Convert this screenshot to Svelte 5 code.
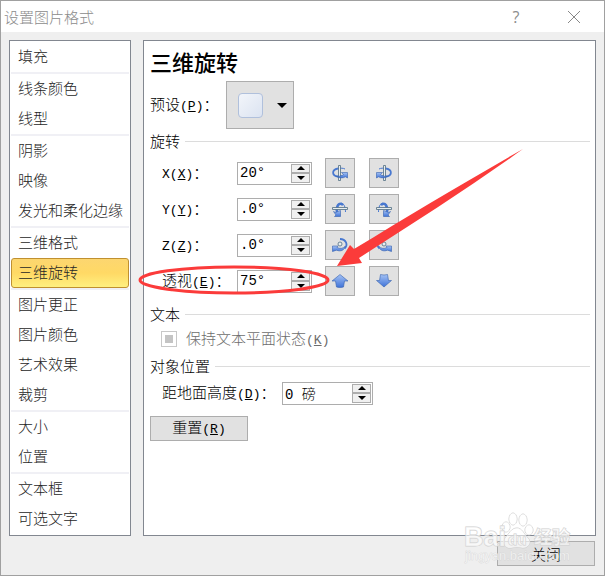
<script>
  let selected = $state('三维旋转');
  let values = $state({ x: '20°', y: '.0°', z: '.0°', p: '75°', ground: '0 磅' });

  const groups = [
    ['填充'],
    ['线条颜色', '线型'],
    ['阴影', '映像', '发光和柔化边缘'],
    ['三维格式', '三维旋转'],
    ['图片更正', '图片颜色', '艺术效果', '裁剪'],
    ['大小', '位置'],
    ['文本框', '可选文字']
  ];

  const rows = [
    { id: 'x', name: 'X', latin: true, key: 'X', icon: 'spin', left: '向左', right: '向右' },
    { id: 'y', name: 'Y', latin: true, key: 'Y', icon: 'tilt', left: '向上', right: '向下' },
    { id: 'z', name: 'Z', latin: true, key: 'Z', icon: 'roll', left: '顺时针', right: '逆时针' },
    { id: 'p', name: '透视', latin: false, key: 'E', icon: 'view', left: '缩小视野', right: '放大视野' }
  ];

  function step(id, by) {
    const unit = id === 'ground' ? ' 磅' : '°';
    values[id] = (parseFloat(values[id]) || 0) + by + unit;
  }
</script>

{#snippet accel(key)}<span class="latin">(<u>{key}</u>)</span>{/snippet}

{#snippet spinner(id)}
  <span class="spinner" class:wide={id === 'ground'}>
    <input id={'field-' + id} type="text" bind:value={values[id]} />
    <span class="steps">
      <button type="button" aria-label="增加" onclick={() => step(id, 1)}>
        <svg width="8" height="4" viewBox="0 0 8 4"><path d="M0 4L4 0L8 4z" /></svg>
      </button>
      <button type="button" aria-label="减少" onclick={() => step(id, -1)}>
        <svg width="8" height="4" viewBox="0 0 8 4"><path d="M0 0L4 4L8 0z" /></svg>
      </button>
    </span>
  </span>
{/snippet}

{#snippet icon(name, flip)}
  <svg width="18" height="18" viewBox="0 0 18 18">
    {#if name === 'view'}
      <path class="blue" d={flip ? 'M5.5 2.5Q9 3.5 12.5 2.5L13.5 8.5H16.5L9 15L1.5 8.5H4.5z' : 'M9 2.500L17 9H13.5L12.5 15Q9 16 5.5 15L4.5 9H1z'} />
    {:else}
      <g transform={flip ? 'translate(18 0) scale(-1 1)' : null}>
        {#if name === 'spin'}
          <path class="curve thin" d="M14 5C12 4 10 4 7 4.5" />
          <path class="curve" d="M7 4.500C0 6 1 12 7 12.500H12" />
          <path class="bar" d="M7.5 1.5h2v15h-2z" />
          <path class="blue" d="M10.5 8.500H16.500V14L14.500 12.800C12 14.500 8 14 5.500 12.500C8 12.500 11 12 12.500 10.500z" />
        {:else if name === 'tilt'}
          <path class="curve thin" d="M10 3C13 3.500 14.500 7 14.500 12" />
          <path class="curve wide-curve" d="M6 13C5 6 8 1.500 12 5" />
          <path class="blue" d="M2.500 11.500L4.500 12.500L8 11L9.500 10.500V16.500H3.500L5 15z" />
          <path class="bar" d="M1.5 7.5h15v2h-15z" />
        {:else}
          <path class="curve" d="M9 3C15 3 17.500 9 13.500 12.500" />
          <path class="blue" d="M1.500 10H7L6 11.500C9 13 12 12.500 14 10.500C13.500 14 10 16 5.500 14.200L1.500 15.500z" />
          <circle class="bar" cx="9" cy="8" r="2" />
        {/if}
      </g>
    {/if}
  </svg>
{/snippet}

<svg class="defs" width="0" height="0" aria-hidden="true">
  <linearGradient id="blue-fill" x1="0" y1="0" x2="0" y2="1">
    <stop offset="0" stop-color="#a5c2f4" />
    <stop offset="1" stop-color="#3f73d8" />
  </linearGradient>
</svg>

<div class="dialog">
  <header>
    <h1>设置图片格式</h1>
    <button type="button" class="help" aria-label="帮助">?</button>
    <button type="button" class="cross" aria-label="关闭窗口">
      <svg width="14" height="14" viewBox="0 0 14 14"><path d="M1 1L13 13M13 1L1 13" /></svg>
    </button>
  </header>

  <div class="body">
    <nav>
      {#each groups as group}
        <ul>
          {#each group as item}
            <li>
              <button type="button" class:active={selected === item} onclick={() => (selected = item)}>{item}</button>
            </li>
          {/each}
        </ul>
      {/each}
    </nav>

    <main>
      <h2>三维旋转</h2>

      <div class="preset">
        <label for="preset">预设{@render accel('P')}：</label>
        <button type="button" id="preset">
          <span class="swatch"></span>
          <svg width="10" height="5" viewBox="0 0 10 5"><path d="M0 0H10L5 5z" /></svg>
        </button>
      </div>

      <h3>旋转</h3>
      {#each rows as row}
        <div class="row">
          <label for={'field-' + row.id}><span class:latin={row.latin}>{row.name}</span>{@render accel(row.key)}：</label>
          {@render spinner(row.id)}
          <div class="turns">
            <button type="button" aria-label={row.left} onclick={() => step(row.id, -5)}>
              {@render icon(row.icon, false)}
            </button>
            <button type="button" aria-label={row.right} onclick={() => step(row.id, 5)}>
              {@render icon(row.icon, true)}
            </button>
          </div>
        </div>
      {/each}

      <h3 class="text-title">文本</h3>
      <label class="check">
        <input type="checkbox" disabled />
        <span>保持文本平面状态{@render accel('K')}</span>
      </label>

      <h3>对象位置</h3>
      <div class="ground">
        <label for="field-ground">距地面高度{@render accel('D')}：</label>
        {@render spinner('ground')}
      </div>

      <button type="button" class="push">重置{@render accel('R')}</button>

      <svg class="marks" width="400" height="160" viewBox="138 140 400 160" aria-hidden="true">
        <ellipse cx="234" cy="280" rx="94" ry="13" />
        <path d="M337 266L350 245L354 249C405 218 465 182 523 149C470 187 415 222 359 258L362 263z" />
      </svg>
    </main>
  </div>

  <footer>
    <button type="button" class="push">关闭</button>
    <svg class="watermark" width="116" height="56" viewBox="0 0 116 56" aria-hidden="true">
      <g class="paw">
        <ellipse cx="44" cy="17" rx="4" ry="5" />
        <ellipse cx="51" cy="9" rx="4" ry="6" />
        <ellipse cx="61" cy="10" rx="4" ry="6" />
        <ellipse cx="67" cy="20" rx="4" ry="5" />
        <path d="M55 18C60 18 62 24 66 28C70 32 67 38 61 38C57 37 53 37 49 38C43 39 40 33 43 28C47 24 49 18 55 18z" />
      </g>
      <text class="brand" x="2" y="36">Bai</text>
      <text class="du" x="46" y="35">du</text>
      <text class="cjk" x="72" y="34">经验</text>
      <text class="site" x="3" y="50">jingyan.baidu.com</text>
    </svg>
  </footer>
</div>

<style>
:global(body) {
  margin: 0;
  background: #a0a0a0;
}

.dialog {
  box-sizing: border-box;
  border: 1px solid #a0a0a0;
  background: #efefef;
  color: #000;
  font: 15px/20px "Noto Sans CJK SC", sans-serif;
  font-weight: 300;
}

.dialog button,
.dialog input {
  box-sizing: border-box;
  margin: 0;
  padding: 0;
  color: inherit;
  font: inherit;
}

.defs {
  position: absolute;
}

.latin {
  font-family: "Liberation Mono", monospace;
  font-size: 13px;
}

header {
  display: flex;
  align-items: center;
  height: 31px;
  padding: 0 20px 0 3px;
  background: #fff;
  color: #8c8c8c;
}

h1 {
  flex: 1;
  margin: 0;
  font-size: 15px;
  font-weight: 300;
}

header button {
  border: 0;
  background: none;
}

.dialog .help {
  width: 20px;
  margin-right: 38px;
  font: 16px "Open Sans", sans-serif;
}

.cross {
  display: flex;
  width: 20px;
  justify-content: center;
}

.cross path {
  fill: none;
  stroke: #888;
}

.body {
  display: flex;
  gap: 12px;
  padding: 8px 8px 0;
}

nav,
main {
  box-sizing: border-box;
  border: 1px solid #828790;
  background: #fff;
}

nav {
  flex: none;
  width: 122px;
  padding: 1px;
}

ul {
  margin: 0;
  padding: 0;
  list-style: none;
}

ul + ul {
  border-top: 2px solid #f0f0f5;
}

nav button {
  display: block;
  width: 100%;
  height: 30px;
  border: 1px solid transparent;
  border-radius: 3px;
  background: none;
  text-align: left;
  white-space: nowrap;
}

.dialog nav button {
  padding: 0 0 2px 6px;
  color: #262626;
}

nav .active {
  border-color: #c09030;
  background: linear-gradient(#fcd670, #ffd965 50%, #fff080);
}

main {
  position: relative;
  flex: 1;
  padding: 6px 5px 0 6px;
}

h2 {
  margin: 0;
  font-size: 22px;
  font-weight: 500;
  line-height: 28px;
}

.preset {
  display: flex;
  align-items: center;
  height: 48px;
  margin-top: 6px;
}

.preset label {
  width: 76px;
}

.preset button {
  display: flex;
  align-items: center;
  justify-content: space-between;
  width: 68px;
  height: 48px;
  border: 1px solid #adadad;
  background: #e1e1e1;
}

.dialog .preset button {
  padding: 0 6px 0 11px;
}

.swatch {
  box-sizing: border-box;
  width: 25px;
  height: 25px;
  border: 1px solid #b0c0dc;
  border-radius: 4px;
  background: linear-gradient(135deg, #f2f5fa, #dbe3f1);
}

h3 {
  display: flex;
  align-items: center;
  gap: 5px;
  margin: 2px 0 0;
  font-size: 15px;
  font-weight: 300;
}

h3::after {
  content: '';
  flex: 1;
  height: 1px;
  background: #dcdcdc;
}

.row {
  display: flex;
  align-items: center;
  height: 36px;
  padding-left: 12px;
}

h3 + .row {
  margin-top: 4px;
}

.row label {
  width: 75px;
}

.spinner {
  box-sizing: border-box;
  display: flex;
  width: 75px;
  height: 23px;
  padding: 1px;
  border: 1px solid #adadad;
  background: #fff;
}

.wide {
  width: 91px;
}

.spinner input {
  flex: 1;
  min-width: 0;
  border: 0;
  outline: 0;
  background: none;
}

.dialog .spinner input {
  padding-left: 1px;
  font: 300 14px "Liberation Mono", "Noto Sans CJK SC", monospace;
}

.steps {
  display: flex;
  flex-direction: column;
  width: 19px;
}

.steps button {
  display: flex;
  flex: 1;
  align-items: center;
  justify-content: center;
  border: 1px solid #adadad;
  background: #f0f0f0;
}

.turns {
  display: flex;
  gap: 14px;
  margin-left: 13px;
}

.turns button {
  display: flex;
  align-items: center;
  justify-content: center;
  width: 30px;
  height: 30px;
  border: 1px solid #adadad;
  background: #e1e1e1;
}

.curve {
  fill: none;
  stroke: #4878d0;
  stroke-width: 1.8;
}

.thin {
  stroke-width: 1;
}

.wide-curve {
  stroke-width: 2.6;
}

.bar {
  fill: #e8eef2;
  stroke: #4f6c80;
  stroke-width: 0.8;
}

.blue {
  fill: url(#blue-fill);
  stroke: #3561ae;
  stroke-width: 0.6;
}

.text-title {
  margin-top: 5px;
}

.check {
  display: flex;
  align-items: center;
  gap: 9px;
  height: 30px;
  padding-left: 11px;
  color: #6d6d6d;
}

.check input {
  display: grid;
  width: 16px;
  height: 16px;
  border: 1px solid #c8c8c8;
  appearance: none;
  background: #fff;
  place-content: center;
}

.check input::before {
  content: '';
  width: 8px;
  height: 8px;
  background: #c4c4c4;
}

.ground {
  display: flex;
  align-items: center;
  height: 34px;
  padding-left: 12px;
}

.ground label {
  width: 120px;
}

.push {
  width: 98px;
  height: 25px;
  border: 1px solid #adadad;
  background: #e1e1e1;
}

main .push {
  display: block;
}

.dialog main .push {
  margin-top: 6px;
}

.marks {
  position: absolute;
  top: 99px;
  left: -6px;
  pointer-events: none;
}

.marks ellipse {
  fill: none;
  stroke: #fb3b3a;
  stroke-width: 3;
}

.marks path {
  fill: #fb3b3a;
}

footer {
  position: relative;
  display: flex;
  justify-content: flex-end;
  padding: 5px 9px 9px;
}

.watermark {
  position: absolute;
  right: 26px;
  bottom: 9px;
  pointer-events: none;
}

.watermark .paw,
.watermark text {
  fill: #fff;
  fill-opacity: 0.6;
  stroke: #cfcfcf;
  paint-order: stroke;
}

.watermark .brand {
  font: bold 27px "Liberation Sans", sans-serif;
}

.watermark .du {
  font: bold 15px "Liberation Sans", sans-serif;
}

.watermark .cjk {
  font: bold 18px "Noto Sans CJK SC", sans-serif;
}

.watermark .site {
  font: 13px "Liberation Sans", sans-serif;
  stroke-width: 0.5;
}
</style>
